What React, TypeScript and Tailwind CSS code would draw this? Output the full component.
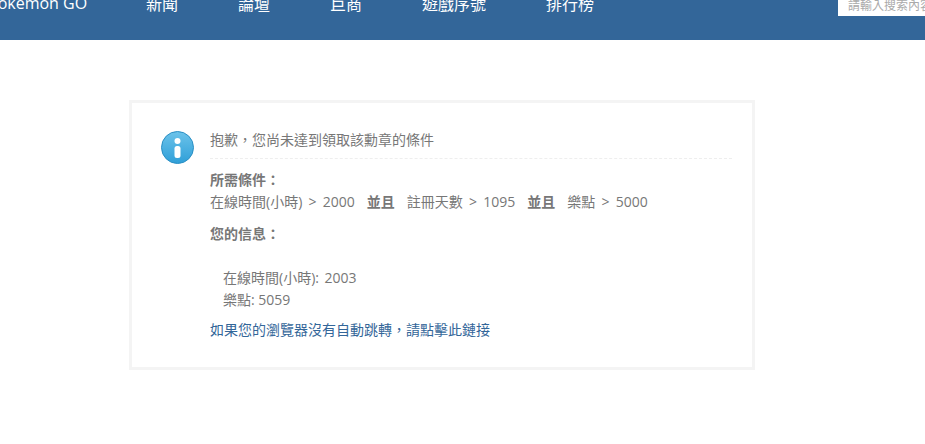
import React from "react";

const font = { fontFamily: '"Open Sans", "Noto Sans CJK TC", sans-serif' };

function InfoIcon() {
  return (
    <svg width="33" height="33" viewBox="0 0 33 33" className="shrink-0">
      <defs>
        <linearGradient id="g" x1="0" y1="0" x2="0" y2="1">
          <stop offset="0" stopColor="#6cc3ea" />
          <stop offset="1" stopColor="#2f9fd8" />
        </linearGradient>
      </defs>
      <circle cx="16.5" cy="16.5" r="16" fill="url(#g)" stroke="#2a8fc4" strokeWidth="1" />
      <circle cx="16.5" cy="10" r="3" fill="#fff" />
      <rect x="13.5" y="15" width="6" height="12" rx="2.5" fill="#fff" />
    </svg>
  );
}

export default function App() {
  return (
    <div className="min-h-[444px] bg-white text-[14px] text-[#777]" style={font}>
      <header className="flex h-10 items-start justify-between overflow-hidden bg-[#336699] text-white">
        <div className="-mt-[9px] flex items-start text-[16px] leading-[24px]">
          <a className="-ml-[12px] w-[158px] shrink-0">Pokemon GO</a>
          <nav className="mt-[1px] flex gap-[60px]">
            <a>新聞</a>
            <a>論壇</a>
            <a>巨商</a>
            <a>遊戲序號</a>
            <a>排行榜</a>
          </nav>
        </div>
        <div className="flex h-4 w-[87px] items-end overflow-hidden bg-white pl-[10px] text-[12px] leading-[20px] whitespace-nowrap text-[#aaa]">
          請輸入搜索內容
        </div>
      </header>

      <main className="ml-[129px] mt-[60px] w-[626px] border-[3px] border-[#f4f4f4] bg-white pb-[26px] pl-[29px] pr-[20px] pt-[25px]">
        <div className="flex gap-[16px]">
          <div className="pt-[3px]">
            <InfoIcon />
          </div>
          <div className="flex-1">
            <p className="border-b border-dashed border-[#eee] pb-[6px] leading-[24px]">抱歉，您尚未達到領取該勳章的條件</p>
            <p className="mt-[10px] font-bold leading-[22px]">所需條件：</p>
            <p className="leading-[22px] [word-spacing:2.6px]">
              在線時間(小時) &gt; 2000<b className="mx-[12px]">並且</b>註冊天數 &gt; 1095<b className="mx-[12px]">並且</b>樂點 &gt; 5000
            </p>
            <p className="mt-[10px] font-bold leading-[22px]">您的信息：</p>
            <p className="mt-[22px] pl-[13px] leading-[22px] [word-spacing:2px]">在線時間(小時): 2003</p>
            <p className="pl-[13px] leading-[22px]">樂點: 5059</p>
            <a className="mt-[8px] block leading-[22px] text-[#336699]">如果您的瀏覽器沒有自動跳轉，請點擊此鏈接</a>
          </div>
        </div>
      </main>
    </div>
  );
}
